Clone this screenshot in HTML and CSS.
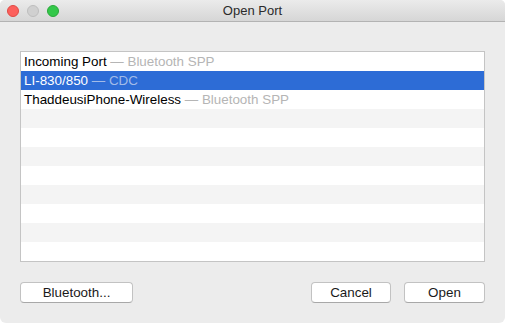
FILE: index.html
```html
<!DOCTYPE html>
<html lang="en">
<head>
    <meta charset="UTF-8">
    <title>Open Port</title>
    <link rel="stylesheet" href="styles.css">
</head>
<body>
    <div class="window">
        <!-- Başlık çubuğu -->
        <div class="titlebar">
            <div class="lights">
                <span class="light close"></span>
                <span class="light min"></span>
                <span class="light zoom"></span>
            </div>
            <div class="title">Open Port</div>
        </div>

        <div class="content">
            <!-- Port listesi -->
            <ul class="port-list">
                <li>Incoming Port <span class="kind">— Bluetooth SPP</span></li>
                <li class="selected">LI-830/850 <span class="kind">— CDC</span></li>
                <li>ThaddeusiPhone-Wireless <span class="kind">— Bluetooth SPP</span></li>
                <li></li>
                <li></li>
                <li></li>
                <li></li>
                <li></li>
                <li></li>
                <li></li>
                <li></li>
            </ul>

            <div class="actions">
                <button class="btn btn-bt">Bluetooth...</button>
                <div class="right">
                    <button class="btn">Cancel</button>
                    <button class="btn">Open</button>
                </div>
            </div>
        </div>
    </div>
</body>
</html>
```

FILE: styles.css
```css
/* Genel */
body {
    margin: 0;
    background: #ffffff;
    font-family: 'Liberation Sans', Arial, sans-serif;
    font-size: 13.4px;
    color: #000;
}

.window {
    width: 505px;
    height: 323px;
    background-color: #ececec;
    border-radius: 5px 5px 6px 6px;
    overflow: hidden;
    display: flex;
    flex-direction: column;
}

/* Başlık çubuğu */
.titlebar {
    height: 22px;
    box-sizing: border-box;
    background: linear-gradient(#ebebeb, #d6d6d6);
    border-bottom: 1px solid #b3b3b3;
    display: flex;
    align-items: center;
    position: relative;
}

.lights {
    display: flex;
    gap: 8px;
    padding-left: 7px;
}

.light {
    width: 12px;
    height: 12px;
    border-radius: 50%;
    box-sizing: border-box;
}

.light.close {
    background: #fc605c;
    border: 1px solid #de4a45;
}

.light.min {
    background: #d0d0d0;
    border: 1px solid #bdbdbd;
}

.light.zoom {
    background: #34c84a;
    border: 1px solid #2aa83a;
}

.title {
    position: absolute;
    left: 0;
    right: 0;
    text-align: center;
    color: #2b2b2b;
    font-size: 13px;
}

/* İçerik */
.content {
    padding: 29px 20px 0 20px;
}

.port-list {
    list-style: none;
    margin: 0;
    padding: 0;
    width: 465px;
    border: 1px solid #c4c4c4;
    box-sizing: border-box;
    background: #ffffff;
}

.port-list li {
    height: 19px;
    line-height: 19px;
    padding-left: 3px;
    white-space: nowrap;
}

.port-list li:nth-child(even) {
    background: #f4f4f4;
}

.port-list li.selected {
    background: #2d6cd6;
    color: #ffffff;
}

.kind {
    color: #b5b5b5;
}

.selected .kind {
    color: #a2bbe8;
}

/* Butonlar */
.actions {
    display: flex;
    justify-content: space-between;
    margin-top: 20px;
}

.right {
    display: flex;
    gap: 13px;
}

.btn {
    font-family: 'Liberation Sans', Arial, sans-serif;
    font-size: 13.4px;
    height: 21px;
    width: 80px;
    padding: 0 0 1px 0;
    background: #ffffff;
    border: 1px solid #c2c2c2;
    border-bottom-color: #a8a8a8;
    border-radius: 4px;
    color: #1a1a1a;
}

.btn-bt {
    width: 113px;
}

.right .btn:last-child {
    width: 81px;
}
```
